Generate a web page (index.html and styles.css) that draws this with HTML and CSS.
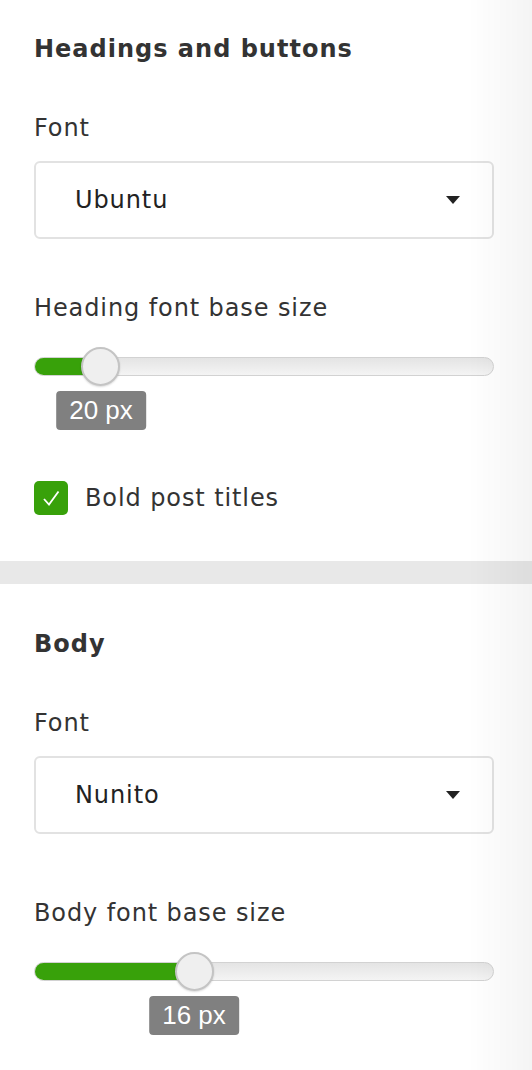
FILE: index.html
```html
<!DOCTYPE html>
<html lang="en">

<head>
    <meta charset="UTF-8">
    <meta name="viewport" content="width=device-width, initial-scale=1.0">
    <title>Typography</title>
    <link rel="stylesheet" href="styles.css">
</head>

<body>
    <section class="panel headings">
        <h2>Headings and buttons</h2>
        <label class="label">Font</label>
        <div class="select">
            <span>Ubuntu</span>
            <svg class="arrow" width="14" height="8" viewBox="0 0 14 8"><path d="M0 0h14L7 8z" fill="#222"/></svg>
        </div>
        <label class="label size">Heading font base size</label>
        <div class="slider">
            <div class="track">
                <div class="fill" style="width: 66px"></div>
            </div>
            <div class="thumb" style="left: 66px"></div>
            <div class="tip" style="left: 67px">20 px</div>
        </div>
        <div class="check">
            <span class="box">
                <svg width="22" height="22" viewBox="0 0 22 22"><path d="M4 12l5 5.5 9.5-13" fill="none" stroke="#fff" stroke-width="1.8"/></svg>
            </span>
            Bold post titles
        </div>
    </section>
    <div class="divider"></div>
    <section class="panel body-font">
        <h2>Body</h2>
        <label class="label">Font</label>
        <div class="select">
            <span>Nunito</span>
            <svg class="arrow" width="14" height="8" viewBox="0 0 14 8"><path d="M0 0h14L7 8z" fill="#222"/></svg>
        </div>
        <label class="label size">Body font base size</label>
        <div class="slider">
            <div class="track">
                <div class="fill" style="width: 160px"></div>
            </div>
            <div class="thumb" style="left: 160px"></div>
            <div class="tip" style="left: 160px">16 px</div>
        </div>
    </section>
    <div class="shade"></div>
</body>

</html>
```

FILE: styles.css
```css
* {
    padding: 0;
    margin: 0;
    box-sizing: border-box;
}

body {
    font-family: "DejaVu Sans", "Noto Sans", sans-serif;
    color: #333;
    background: #fff;
    width: 532px;
    height: 1070px;
    overflow: hidden;
    letter-spacing: .9px;
}

.panel {
    display: flex;
    flex-direction: column;
    padding: 34px 38px 46px 34px;
}

.panel.body-font {
    padding-top: 45px;
}

h2 {
    font-size: 24px;
    font-weight: 700;
    line-height: 31px;
    letter-spacing: 1px;
    color: #333;
}

.label {
    display: block;
    font-size: 24px;
    line-height: 30px;
    margin-top: 48px;
}

.label.size {
    margin-top: 54px;
}

.body-font .label.size {
    margin-top: 64px;
}

.select {
    margin-top: 18px;
    height: 78px;
    border: 2px solid #e2e2e2;
    border-radius: 6px;
    display: flex;
    align-items: center;
    justify-content: space-between;
    padding: 0 32px 0 39px;
    font-size: 24px;
    color: #222;
}

.slider {
    position: relative;
    height: 83px;
    margin-top: 24px;
}

.track {
    position: absolute;
    top: 10px;
    left: 0;
    right: 0;
    height: 19px;
    border-radius: 10px;
    border: 1px solid #d2d2d2;
    background: linear-gradient(#e4e4e4, #f4f4f4);
    overflow: hidden;
}

.fill {
    height: 100%;
    background: #38a10a;
}

.thumb {
    position: absolute;
    top: 0;
    width: 39px;
    height: 39px;
    margin-left: -19px;
    border-radius: 50%;
    background: #efefef;
    border: 2px solid #c4c4c4;
    box-shadow: 0 1px 2px rgba(0, 0, 0, .15);
}

.tip {
    position: absolute;
    top: 44px;
    transform: translateX(-50%);
    background: #808080;
    color: #fff;
    font-family: "Liberation Sans", Arial, sans-serif;
    font-size: 26px;
    line-height: 39px;
    letter-spacing: 0;
    padding: 0 13px;
    border-radius: 4px;
    white-space: nowrap;
}

.check {
    display: flex;
    align-items: center;
    gap: 17px;
    margin-top: 51px;
    font-size: 24px;
    line-height: 34px;
}

.check .box {
    width: 34px;
    height: 34px;
    border-radius: 5px;
    background: #38a10a;
    display: flex;
    align-items: center;
    justify-content: center;
}

.divider {
    height: 23px;
    background: #e8e8e8;
}

.shade {
    position: fixed;
    top: 0;
    right: 0;
    width: 64px;
    height: 100%;
    background: linear-gradient(to right, rgba(0, 0, 0, 0), rgba(0, 0, 0, .045));
    pointer-events: none;
}
```
